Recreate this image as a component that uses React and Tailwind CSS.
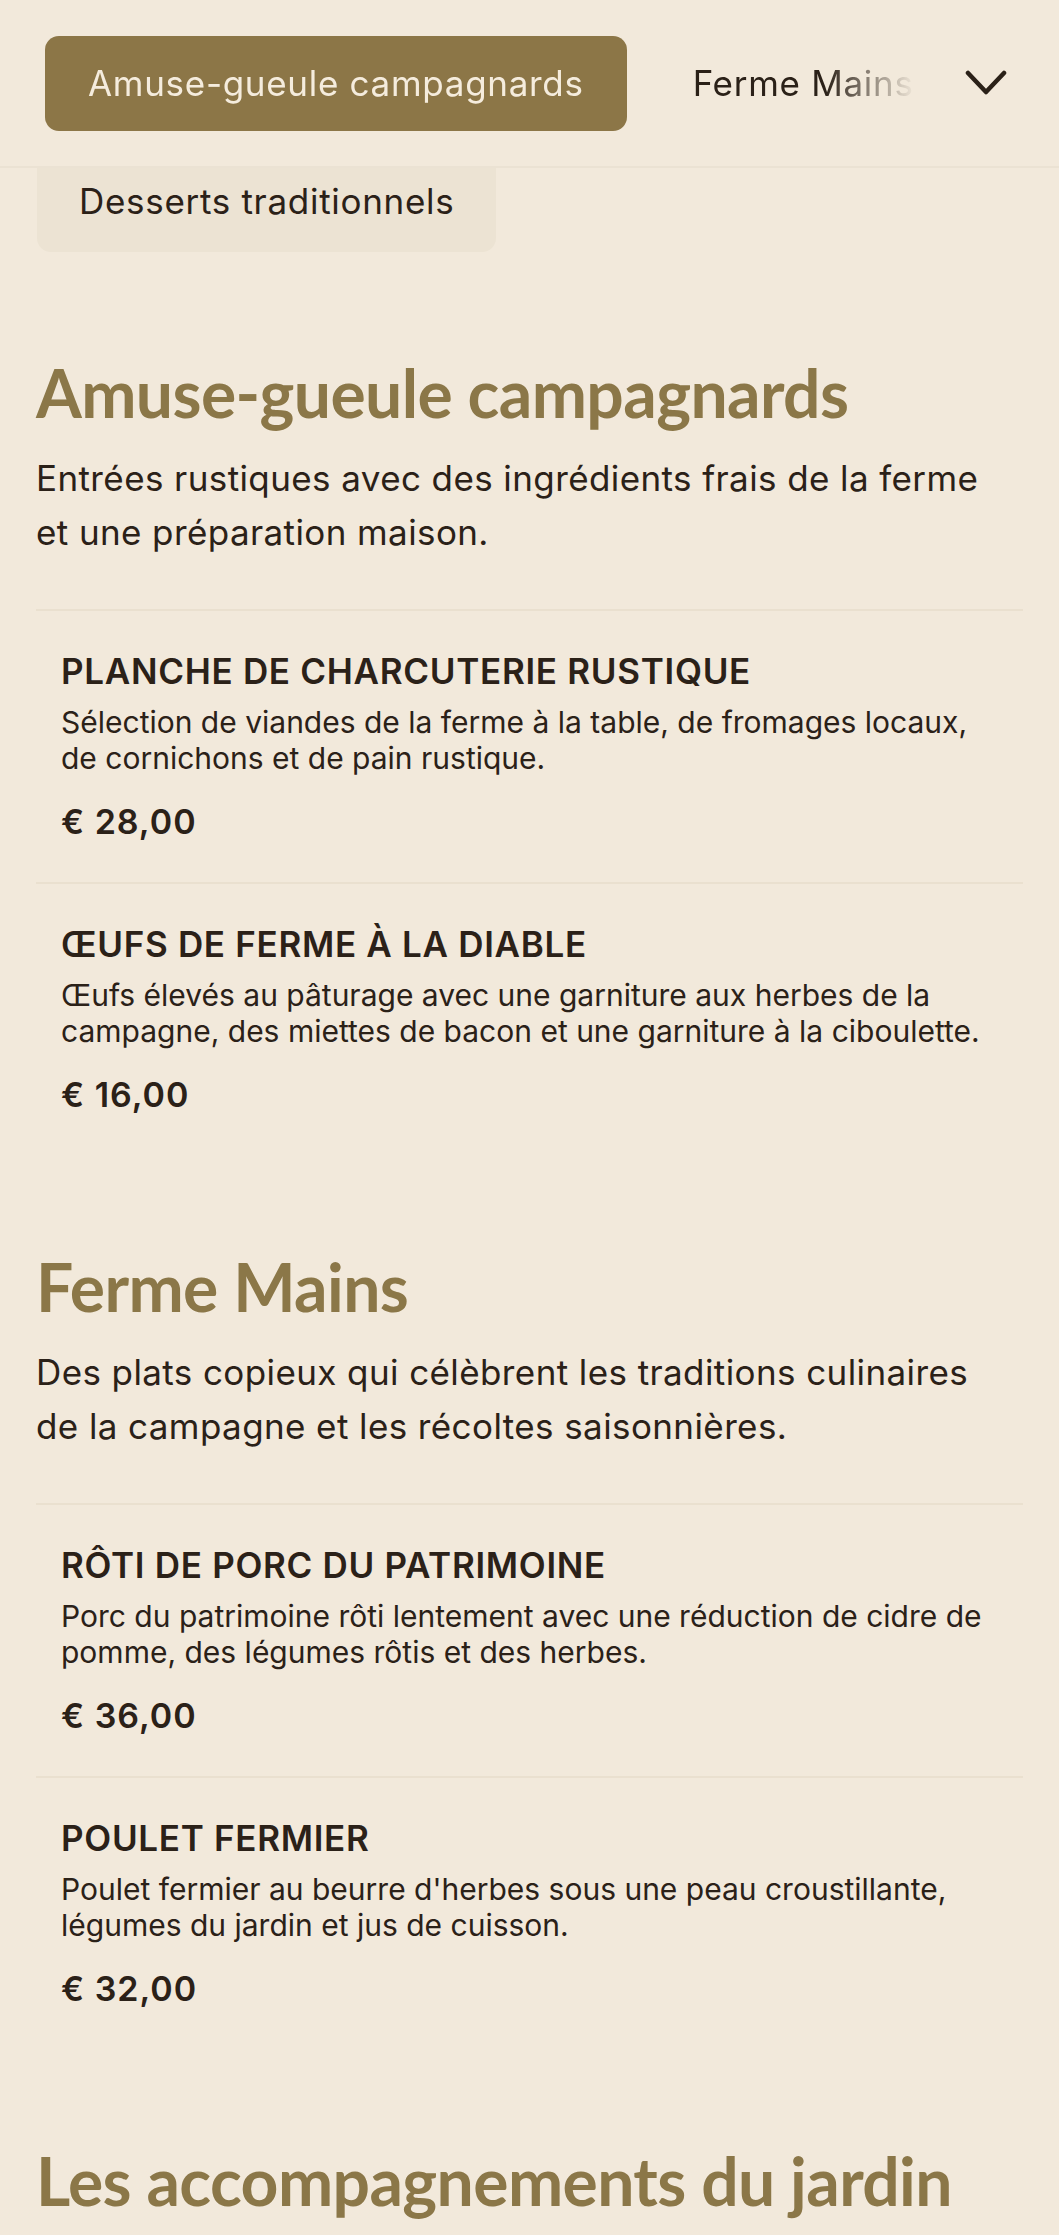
import React from 'react'

const sections = [
  {
    title: 'Amuse-gueule campagnards',
    description: 'Entrées rustiques avec des ingrédients frais de la ferme et une préparation maison.',
    items: [
      {
        name: 'PLANCHE DE CHARCUTERIE RUSTIQUE',
        description: 'Sélection de viandes de la ferme à la table, de fromages locaux, de cornichons et de pain rustique.',
        price: '€ 28,00',
      },
      {
        name: 'ŒUFS DE FERME À LA DIABLE',
        description: 'Œufs élevés au pâturage avec une garniture aux herbes de la campagne, des miettes de bacon et une garniture à la ciboulette.',
        price: '€ 16,00',
      },
    ],
  },
  {
    title: 'Ferme Mains',
    description: 'Des plats copieux qui célèbrent les traditions culinaires de la campagne et les récoltes saisonnières.',
    items: [
      {
        name: 'RÔTI DE PORC DU PATRIMOINE',
        description: 'Porc du patrimoine rôti lentement avec une réduction de cidre de pomme, des légumes rôtis et des herbes.',
        price: '€ 36,00',
      },
      {
        name: 'POULET FERMIER',
        description: "Poulet fermier au beurre d'herbes sous une peau croustillante, légumes du jardin et jus de cuisson.",
        price: '€ 32,00',
      },
    ],
  },
  {
    title: 'Les accompagnements du jardin',
    description: '',
    items: [],
  },
]

function MenuItem({ item }) {
  return (
    <div className="px-[25px] pt-[38px] pb-[38px] border-t-2 border-[#EAE0CF]">
      <h3 className="text-[35px] leading-[44px] font-semibold tracking-[0.7px]">{item.name}</h3>
      <p className="mt-[11px] text-[30px] leading-[36px]">{item.description}</p>
      <div className="mt-[23px] text-[34px] leading-[45px] font-semibold tracking-[1px]">{item.price}</div>
    </div>
  )
}

export default function App() {
  return (
    <div className="min-h-screen bg-[#F2E9DB] font-['Inter',sans-serif] text-[#2B2118] overflow-hidden">
      {/* category tabs */}
      <div className="flex items-center h-[168px] border-b-2 border-[#EBE2D3] pl-[45px] pr-[52px]">
        <div className="flex-1 flex items-center gap-[23px] overflow-hidden [mask-image:linear-gradient(to_right,#000_calc(100%_-_90px),transparent)]">
          <button className="shrink-0 h-[95px] px-[43px] rounded-[14px] bg-[#8C7647] text-[#F5ECDD] text-[35px] tracking-[0.7px]">
            Amuse-gueule campagnards
          </button>
          <button className="shrink-0 h-[95px] px-[43px] text-[35px] tracking-[0.7px]">Ferme Mains</button>
          <button className="shrink-0 h-[95px] px-[43px] text-[35px] tracking-[0.7px]">Les accompagnements du jardin</button>
        </div>
        <svg className="ml-[50px] shrink-0" width="42" height="26" viewBox="0 0 42 26" fill="none">
          <path d="M3 3 L21 22 L39 3" stroke="#2B2118" strokeWidth="4.5" strokeLinecap="round" strokeLinejoin="round" />
        </svg>
      </div>

      {/* next category pill, scrolled under the bar */}
      <div className="px-[37px]">
        <div className="inline-flex h-[84px] items-start pt-[8px] px-[42px] rounded-b-[14px] bg-[#ECE3D3] text-[35px] leading-[51px] tracking-[0.7px]">
          Desserts traditionnels
        </div>
      </div>

      {sections.map((section, i) => (
        <section key={section.title} className={`px-[36px] ${i === 0 ? 'pt-[101px]' : 'pt-[92px]'}`}>
          <h2 className="font-['Lato',sans-serif] font-bold text-[66px] leading-[1.2] text-[#8B7748] tracking-[-0.6px]">
            {section.title}
          </h2>
          {section.description && (
            <p className="mt-[19px] max-w-[960px] text-[35px] leading-[54px] tracking-[0.4px]">{section.description}</p>
          )}
          {section.items.length > 0 && (
            <div className="mt-[50px]">
              {section.items.map((item) => (
                <MenuItem key={item.name} item={item} />
              ))}
            </div>
          )}
        </section>
      ))}
      <div className="h-[200px]" />
    </div>
  )
}
